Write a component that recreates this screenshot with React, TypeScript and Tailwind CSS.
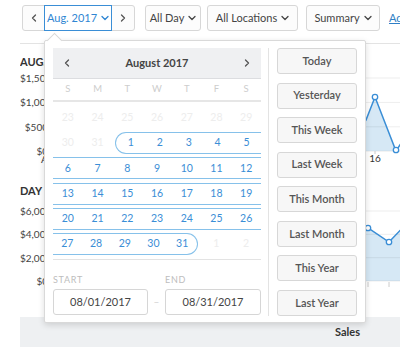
import React from 'react';

const Chevron: React.FC<{ dir: 'down' | 'left' | 'right'; className?: string }> = ({ dir, className }) => {
  const d =
    dir === 'down' ? 'M1 1.5 L4 4.5 L7 1.5' : dir === 'left' ? 'M4.5 1 L1.5 4 L4.5 7' : 'M1.5 1 L4.5 4 L1.5 7';
  const size = dir === 'down' ? { w: 8, h: 6 } : { w: 6, h: 8 };
  return (
    <svg width={size.w} height={size.h} viewBox={`0 0 ${size.w} ${size.h}`} className={className}>
      <path d={d} fill="none" stroke="currentColor" strokeWidth="1.3" strokeLinecap="round" strokeLinejoin="round" />
    </svg>
  );
};

const weekdays = ['S', 'M', 'T', 'W', 'T', 'F', 'S'];
const presets = ['Today', 'Yesterday', 'This Week', 'Last Week', 'This Month', 'Last Month', 'This Year', 'Last Year'];

const Cell: React.FC<{ n: number; muted?: boolean }> = ({ n, muted }) => (
  <div
    className={`flex-1 flex items-center justify-center text-[10.5px] ${muted ? 'text-[#ededed]' : 'text-[#3a8ed6]'}`}
  >
    {n}
  </div>
);

const Calendar: React.FC = () => (
  <div className="w-[208px] flex flex-col">
    <div className="h-[31px] bg-[#eff0f2] border-b border-[#dcdde0] flex items-center justify-between px-[11px] text-[#555]">
      <Chevron dir="left" />
      <span className="text-[11px] font-bold text-[#444]">August 2017</span>
      <Chevron dir="right" />
    </div>
    <div className="h-[23px] flex border-b-2 border-[#e6e6e6]">
      {weekdays.map((w, i) => (
        <div key={i} className="flex-1 flex items-center justify-center text-[9.5px] text-[#cdcdcd]">
          {w}
        </div>
      ))}
    </div>
    <div className="flex flex-col pt-[5px] gap-[3.2px]">
      <div className="h-[22px] flex">
        {[23, 24, 25, 26, 27, 28, 29].map((n) => (
          <Cell key={n} n={n} muted />
        ))}
      </div>
      <div className="h-[22px] flex">
        <div className="w-[29.7px] flex"><Cell n={30} muted /></div>
        <div className="w-[29.7px] flex"><Cell n={31} muted /></div>
        <div className="flex-1 flex ml-[3px] border-y border-l border-[#86c1ea] rounded-l-full">
          {[1, 2, 3, 4, 5].map((n) => (
            <Cell key={n} n={n} />
          ))}
        </div>
      </div>
      {[
        [6, 7, 8, 9, 10, 11, 12],
        [13, 14, 15, 16, 17, 18, 19],
        [20, 21, 22, 23, 24, 25, 26],
      ].map((week) => (
        <div key={week[0]} className="h-[22px] flex border-y border-[#86c1ea]">
          {week.map((n) => (
            <Cell key={n} n={n} />
          ))}
        </div>
      ))}
      <div className="h-[22px] flex">
        <div className="w-[144.5px] flex border-y border-r border-[#86c1ea] rounded-r-full">
          {[27, 28, 29, 30, 31].map((n) => (
            <Cell key={n} n={n} />
          ))}
        </div>
        <div className="flex-1 flex ml-[4px]">
          <Cell n={1} muted />
          <Cell n={2} muted />
        </div>
      </div>
    </div>
    <div className="mt-[4px] border-t border-[#e3e3e3]" />
    <div className="mt-[14px] flex text-[9px] tracking-[0.08em] text-[#bdbdbd] leading-[12px]">
      <span className="w-[112px]">START</span>
      <span>END</span>
    </div>
    <div className="mt-[3px] flex items-center">
      <div className="w-[95px] h-[26px] border border-[#d6d6d6] rounded-[3px] flex items-center justify-center text-[11px] text-[#444]">
        08/01/2017
      </div>
      <div className="w-[17px] flex justify-center text-[10px] text-[#cfcfcf]">–</div>
      <div className="w-[96px] h-[26px] border border-[#d6d6d6] rounded-[3px] flex items-center justify-center text-[11px] text-[#444]">
        08/31/2017
      </div>
    </div>
  </div>
);

const Popover: React.FC = () => (
  <div className="absolute left-[44px] top-[40px] w-[322px] h-[283px] bg-white border border-[#d9d9d9] rounded-[2px] shadow-[0_2px_6px_rgba(0,0,0,0.14)]">
    <div className="absolute -top-[6px] left-[4px] w-[11px] h-[11px] bg-white border-l border-t border-[#d9d9d9] rotate-45" />
    <div className="relative flex pt-[7px] pl-[8px]">
      <Calendar />
      <div className="ml-[7px] w-px h-[268px] bg-[#e3e3e3]" />
      <div className="ml-[8px] w-[80px] h-[268px] flex flex-col justify-between">
        {presets.map((p) => (
          <button
            key={p}
            className="h-[26px] w-full bg-[#f7f7f7] border border-[#d7d7d7] rounded-[3px] text-[11px] font-semibold text-[#555]"
          >
            {p}
          </button>
        ))}
      </div>
    </div>
  </div>
);

const ChartOne: React.FC = () => (
  <svg width="352" height="98" className="overflow-visible shrink-0">
    <polygon points="270,79 300,70 318,48 327,25 348,79" fill="#d6e8f5" />
    {[6, 30.4, 54.8, 79.2].map((y) => (
      <line key={y} x1="0" x2="352" y1={y} y2={y} stroke="#000" strokeOpacity="0.07" />
    ))}
    <polyline points="270,79 300,70 318,48 327,25 348,79 370,45" fill="none" stroke="#3a8ed6" strokeWidth="1.5" />
    <circle cx="327" cy="25" r="2.7" fill="#fff" stroke="#3a8ed6" strokeWidth="1.3" />
    <circle cx="348" cy="78" r="2.7" fill="#fff" stroke="#3a8ed6" strokeWidth="1.3" />
    <line x1="327" x2="327" y1="79" y2="82" stroke="#ccc" />
    <text x="327" y="90" fontSize="10" textAnchor="middle" fill="#333">16</text>
    <text x="-7" y="91" fontSize="10" fill="#333">A</text>
  </svg>
);

const ChartTwo: React.FC = () => (
  <svg width="352" height="94" className="overflow-visible shrink-0">
    <polygon points="290,40 320,23 341,37 362,15 362,76 290,76" fill="#d6e8f5" />
    {[6, 29.3, 52.7, 76].map((y) => (
      <line key={y} x1="0" x2="352" y1={y} y2={y} stroke="#000" strokeOpacity="0.07" />
    ))}
    <polyline points="290,40 320,23 341,37 362,15" fill="none" stroke="#3a8ed6" strokeWidth="1.5" />
    <circle cx="320" cy="23" r="2.7" fill="#fff" stroke="#3a8ed6" strokeWidth="1.3" />
    <circle cx="341" cy="37" r="2.7" fill="#fff" stroke="#3a8ed6" strokeWidth="1.3" />
    <line x1="320" x2="320" y1="77" y2="82" stroke="#ccc" />
    <line x1="341" x2="341" y1="77" y2="82" stroke="#ccc" />
  </svg>
);

const Axis: React.FC<{ labels: string[]; rowH: string }> = ({ labels, rowH }) => (
  <div className="w-[28px] shrink-0 flex flex-col text-right text-[10px] text-[#444]">
    {labels.map((l) => (
      <div key={l} className={`${rowH} leading-[12px] whitespace-nowrap`}>
        {l}
      </div>
    ))}
  </div>
);

const btn = 'shrink-0 h-[26px] flex items-center justify-center gap-[4px] border border-[#d7d7d7] bg-[#fcfcfc]';

const App: React.FC = () => {
  return (
    <div className="relative w-[400px] h-[347px] overflow-hidden bg-white font-['Lato','Liberation_Sans',sans-serif]">
      <div className="flex items-center pt-[5px] pl-[22px] text-[11px] text-[#444]">
        <button className={`${btn} w-[23px] rounded-l-[3px] text-[#555]`}>
          <Chevron dir="left" />
        </button>
        <button className="relative shrink-0 -ml-px w-[68px] h-[26px] flex items-center justify-center gap-[4px] border border-[#3a8ed6] bg-white text-[#2f86d3]">
          Aug. 2017
          <Chevron dir="down" />
        </button>
        <button className={`${btn} -ml-px w-[24px] rounded-r-[3px] text-[#555]`}>
          <Chevron dir="right" />
        </button>
        <button className={`${btn} ml-[10px] w-[56px] rounded-[3px]`}>
          All Day
          <Chevron dir="down" />
        </button>
        <button className={`${btn} ml-[6px] w-[91px] rounded-[3px]`}>
          All Locations
          <Chevron dir="down" />
        </button>
        <button className={`${btn} ml-[8px] w-[74px] rounded-[3px]`}>
          Summary
          <Chevron dir="down" />
        </button>
        <span className="shrink-0 ml-[9px] text-[#2f7fc6] underline whitespace-nowrap">Add</span>
      </div>

      <div className="ml-[20px] mt-[12px] border-t border-[#e3e3e3] flex flex-col">
        <div className="mt-[12px] w-[24px] h-[12px] leading-[12px] overflow-hidden whitespace-nowrap text-[11px] font-bold text-[#333]">
          AUG. 2017
        </div>
        <div className="mt-[4px] flex">
          <Axis labels={['$1,500', '$1,000', '$500', '$0']} rowH="h-[24.4px]" />
          <ChartOne />
        </div>
        <div className="mt-[15px] w-[24px] h-[12px] leading-[12px] overflow-hidden whitespace-nowrap text-[11px] font-bold text-[#333]">
          DAY OF WEEK
        </div>
        <div className="mt-[8px] flex">
          <Axis labels={['$6,000', '$4,000', '$2,000', '$0']} rowH="h-[23.33px]" />
          <ChartTwo />
        </div>
        <div className="mt-[18px] h-[31px] bg-[#eef0f2] flex items-center justify-end pr-[40px] text-[11px] font-bold text-[#333]">
          Sales
        </div>
      </div>

      <Popover />
    </div>
  );
};

export default App;
